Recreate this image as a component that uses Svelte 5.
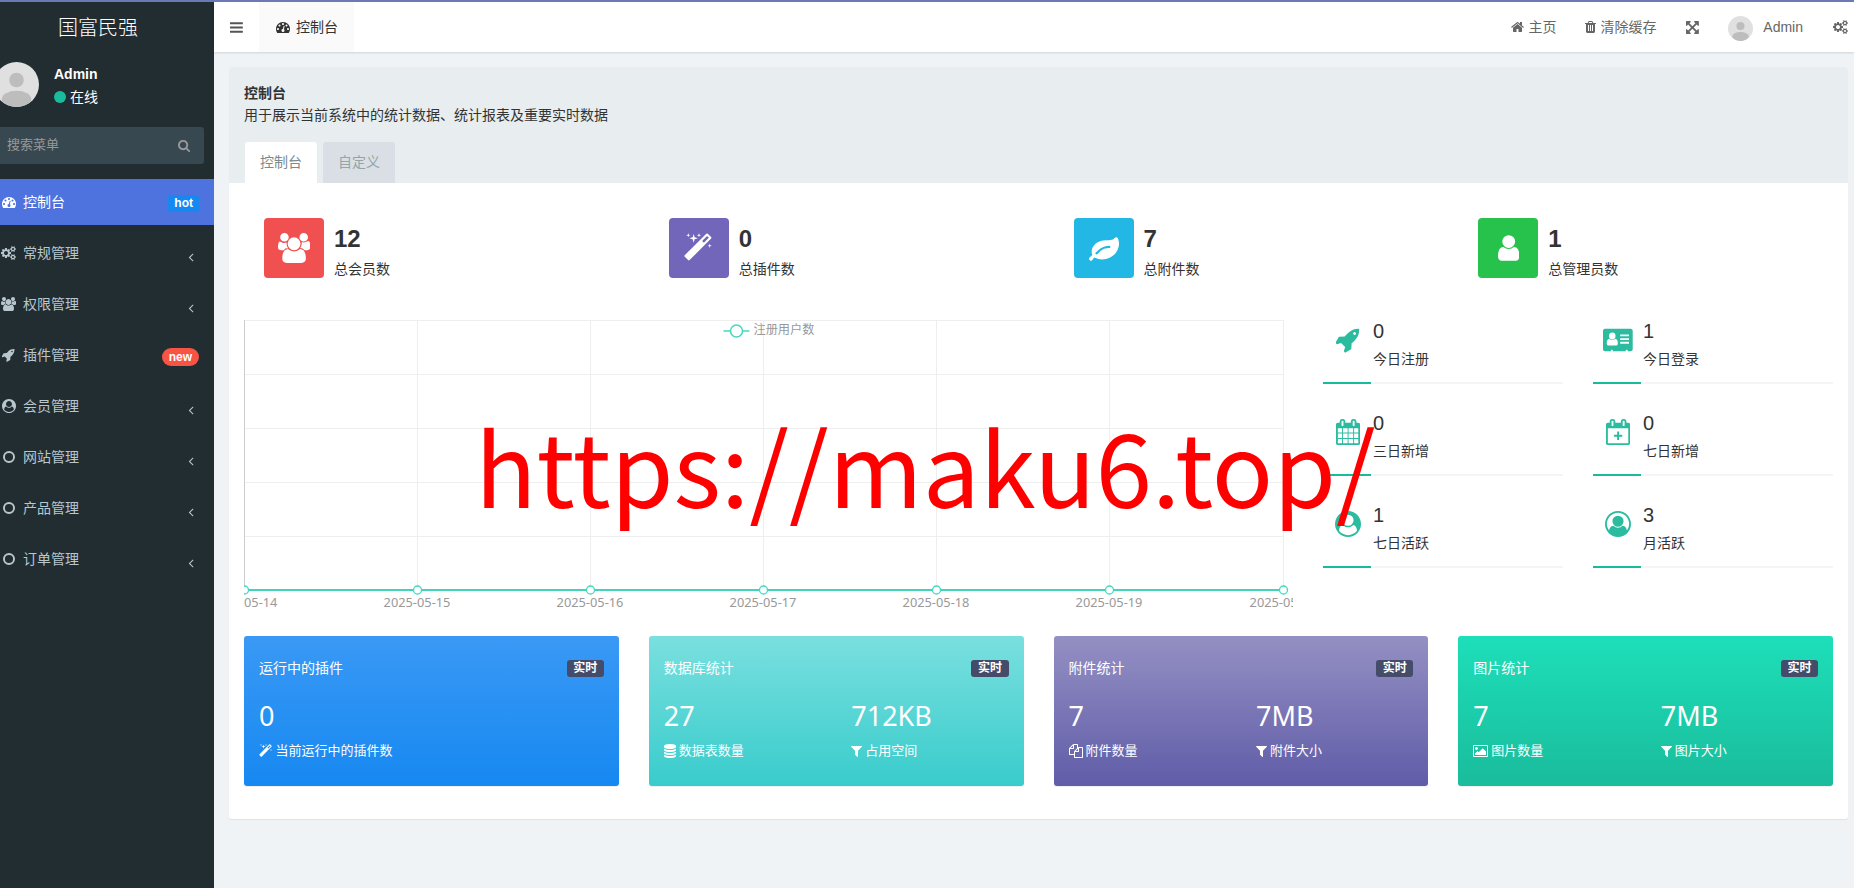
<script>
  // viewBox + path of every icon
  const gear = "q0 16-149 31-12 27-30 52 51 113 51 138 0 4-4 7-122 71-124 71-8 0-46-47t-52-68q-20 2-30 2t-30-2q-14 21-52 68t-46 47q-2 0-124-71-4-3-4-7 0-25 51-138-18-25-30-52-149-15-149-31v-140q0-16 149-31 13-29 30-52-51-113-51-138 0-4 4-7 4-2 35-20t59-34 30-16q8 0 46 46.5t52 67.5q20-2 30-2t30 2q51-71 92-112l6-2q4 0 124 70 4 3 4 7 0 25-51 138 17 23 30 52 149 15 149 31z";
  const tab = "v-288q0-13-9.5-22.5t-22.5-9.5h-64q-13 0-22.5 9.5t-9.5 22.5v288q0 13 9.5 22.5t22.5 9.5h64q13 0 22.5-9.5t9.5-22.5z";
  const calendarBox = "M1728 384v1280q0 52-38 90t-90 38h-1408q-52 0-90-38t-38-90v-1280q0-52 38-90t90-38h128v-96q0-66 47-113t113-47h64q66 0 113 47t47 113v96h384v-96q0-66 47-113t113-47h64q66 0 113 47t47 113v96h128q52 0 90 38t38 90z";
  const bar = "v128q0 26-19 45t-45 19h-1408q-26 0-45-19t-19-45v-128q0-26 19-45t45-19h1408q26 0 45 19t19 45z";
  const disk = "v170q0 69-103 128t-280 93.5-385 34.5-385-34.5-280-93.5-103-128v-170q119 84 325 127t443 43 443-43 325-127z";
  const slot = "v-704q0-14-9-23t-23-9h-64q-14 0-23 9t-9 23v704q0 14 9 23t23 9h64q14 0 23-9t9-23z";

  const icons = {
    bars: [128, 1536, `M1664 1344${bar}M1664 832${bar}M1664 320${bar}`],
    dashboard: [0, 1792, "M384 1152q0-53-37.5-90.5t-90.5-37.5-90.5 37.5-37.5 90.5 37.5 90.5 90.5 37.5 90.5-37.5 37.5-90.5zm192-448q0-53-37.5-90.5t-90.5-37.5-90.5 37.5-37.5 90.5 37.5 90.5 90.5 37.5 90.5-37.5 37.5-90.5zm428 481l101-382q6-26-7.5-48.5t-38.5-29.5-48 6.5-30 39.5l-101 382q-60 5-107 43.5t-63 98.5q-20 77 20 146t117 89 146-20 89-117q16-60-6-117t-72-91zm660-33q0-53-37.5-90.5t-90.5-37.5-90.5 37.5-37.5 90.5 37.5 90.5 90.5 37.5 90.5-37.5 37.5-90.5zm-640-640q0-53-37.5-90.5t-90.5-37.5-90.5 37.5-37.5 90.5 37.5 90.5 90.5 37.5 90.5-37.5 37.5-90.5zm448 192q0-53-37.5-90.5t-90.5-37.5-90.5 37.5-37.5 90.5 37.5 90.5 90.5 37.5 90.5-37.5 37.5-90.5zm320 448q0 261-141 483-19 29-54 29h-1402q-35 0-54-29-141-221-141-483 0-182 71-348t191-286 286-191 348-71 348 71 286 191 191 286 71 348z"],
    cogs: [0, 1920, `M896 896q0-106-75-181t-181-75-181 75-75 181 75 181 181 75 181-75 75-181zm768 512q0-52-38-90t-90-38-90 38-38 90q0 53 37.5 90.5t90.5 37.5 90.5-37.5 37.5-90.5zm0-1024q0-52-38-90t-90-38-90 38-38 90q0 53 37.5 90.5t90.5 37.5 90.5-37.5 37.5-90.5zm-384 421v185q0 10-7 19.5t-16 10.5l-155 24q-11 35-32 76 34 48 90 115 7 11 7 20 0 12-7 19-23 30-82.5 89.5t-78.5 59.5q-11 0-21-7l-115-90q-37 19-77 31-11 108-23 155-7 24-30 24h-186q-11 0-20-7.5t-10-17.5l-23-153q-34-10-75-31l-118 89q-7 7-20 7-11 0-21-8-144-133-144-160 0-9 7-19 10-14 41-53t47-61q-23-44-35-82l-152-24q-10-1-17-9.5t-7-19.5v-185q0-10 7-19.5t16-10.5l155-24q11-35 32-76-34-48-90-115-7-11-7-20 0-12 7-20 22-30 82-89t79-59q11 0 21 7l115 90q34-18 77-32 11-108 23-154 7-24 30-24h186q11 0 20 7.5t10 17.5l23 153q34 10 75 31l118-89q8-7 20-7 11 0 21 8 144 133 144 160 0 8-7 19-12 16-42 54t-45 60q23 48 34 82l152 23q10 2 17 10.5t7 19.5zM1920 1338v140${gear}M1920 314v140${gear}`],
    users: [0, 1920, "M593 896q-162 5-265 128h-134q-82 0-138-40.5t-56-118.5q0-353 124-353 6 0 43.5 21t97.5 42.5 119 21.5q67 0 133-23-5 37-5 66 0 159 93 293zm1071 637q0 120-73 189.5t-194 69.5h-874q-121 0-194-69.5t-73-189.5q0-53 3.5-103.5t14-109 26.5-108.5 43-97.5 62-81 85.5-53.5 111.5-20q10 0 43 21.5t73 48 107 48 135 21.5 135-21.5 107-48 73-48 43-21.5q61 0 111.5 20t85.5 53.5 62 81 43 97.5 26.5 108.5 14 109 3.5 103.5zm-1024-1277q0 106-75 181t-181 75-181-75-75-181 75-181 181-75 181 75 75 181zm704 384q0 159-112.5 271.5t-271.5 112.5-271.5-112.5-112.5-271.5 112.5-271.5 271.5-112.5 271.5 112.5 112.5 271.5zm576 225q0 78-56 118.5t-138 40.5h-134q-103-123-265-128 93-134 93-293 0-29-5-66 66 23 133 23 59 0 119-21.5t97.5-42.5 43.5-21q124 0 124 353zm-128-609q0 106-75 181t-181 75-181-75-75-181 75-181 181-75 181 75 75 181z"],
    rocket: [64, 1664, "M1440 448q0-40-28-68t-68-28-68 28-28 68 28 68 68 28 68-28 28-68zm224-288q0 249-75.5 430.5t-253.5 360.5q-81 80-195 176l-20 379q-2 16-16 26l-384 224q-7 4-16 4-12 0-23-9l-64-64q-13-14-8-32l85-276-281-281-276 85q-3 1-9 1-14 0-23-9l-64-64q-17-19-5-39l224-384q10-14 26-16l379-20q96-114 176-195 188-187 358-258t431-71q14 0 24 9.5t10 22.5z"],
    member: [0, 1792, "M1523 1339q-22-155-87.5-257.5t-184.5-118.5q-67 74-159.5 115.5t-195.5 41.5-195.5-41.5-159.5-115.5q-119 16-184.5 118.5t-87.5 257.5q106 150 271 237.5t356 87.5 356-87.5 271-237.5zm-243-699q0-159-112.5-271.5t-271.5-112.5-271.5 112.5-112.5 271.5 112.5 271.5 271.5 112.5 271.5-112.5 112.5-271.5zm512 256q0 182-71 347.5t-190.5 286-285.5 191.5-349 71-348-71-286-191-191-286-71-348 71-348 191-286 286-191 348-71 348 71 286 191 191 286 71 348z"],
    memberOutline: [0, 1792, "M896 0q182 0 348 71t286 191 191 286 71 348q0 181-70.5 347t-190.5 286-286 191.5-349 71.5-349-71-285.5-191.5-190.5-286-71-347.5 71-348 191-286 286-191 348-71zm619 1351q149-205 149-455 0-156-61-298t-164-245-245-164-298-61-298 61-245 164-164 245-61 298q0 250 149 455 66-327 306-327 131 128 313 128t313-128q240 0 306 327zm-235-647q0-159-112.5-271.5t-271.5-112.5-271.5 112.5-112.5 271.5 112.5 271.5 271.5 112.5 271.5-112.5 112.5-271.5z"],
    circle: [128, 1536, "M896 128a768 768 0 1 0 0 1536a768 768 0 1 0 0-1536zM896 376a520 520 0 1 1 0 1040a520 520 0 1 1 0-1040z"],
    search: [64, 1664, "M1216 832q0-185-131.5-316.5t-316.5-131.5-316.5 131.5-131.5 316.5 131.5 316.5 316.5 131.5 316.5-131.5 131.5-316.5zm512 832q0 52-38 90t-90 38q-54 0-90-38l-343-342q-179 124-399 124-143 0-273.5-55.5t-225-150-150-225-55.5-273.5 55.5-273.5 150-225 225-150 273.5-55.5 273.5 55.5 225 150 150 225 55.5 273.5q0 220-124 399l343 343q37 37 37 90z"],
    angle: [512, 768, "M1203 544q0 13-10 23l-393 393 393 393q10 10 10 23t-10 23l-50 50q-10 10-23 10t-23-10l-466-466q-10-10-10-23t10-23l466-466q10-10 23-10t23 10l50 50q10 10 10 23z"],
    home: [64, 1664, "M1472 992v480q0 26-19 45t-45 19h-384v-384h-256v384h-384q-26 0-45-19t-19-45v-480q0-1 .5-3t.5-3l575-474 575 474q1 2 1 6zm223-69l-62 74q-8 9-21 11h-3q-13 0-21-7l-692-577-692 577q-12 8-24 7-13-2-21-11l-62-74q-8-10-7-23.5t11-21.5l719-599q32-26 76-26t76 26l244 204v-195q0-14 9-23t23-9h192q14 0 23 9t9 23v408l219 182q10 8 11 21.5t-7 23.5z"],
    trash: [192, 1408, `M704 1376${slot}M960 1376${slot}M1216 1376${slot}M672 384h448l-48-117q-7-9-17-11h-317q-10 2-17 11zm928 32v64q0 14-9 23t-23 9h-96v948q0 83-47 143.5t-113 60.5h-832q-66 0-113-58.5t-47-141.5v-952h-96q-14 0-23-9t-9-23v-64q0-14 9-23t23-9h309l70-167q15-37 54-63t79-26h320q40 0 79 26t54 63l70 167h309q14 0 23 9t9 23z`],
    arrows: [128, 1536, "M1411 541l-355 355 355 355 144-144q29-31 70-14 39 17 39 59v448q0 26-19 45t-45 19h-448q-42 0-59-40-17-39 14-69l144-144-355-355-355 355 144 144q31 30 14 69-17 40-59 40h-448q-26 0-45-19t-19-45v-448q0-42 40-59 39-17 69 14l144 144 355-355-355-355-144 144q-19 19-45 19-12 0-24-5-40-17-40-59v-448q0-26 19-45t45-19h448q42 0 59 40 17 39-14 69l-144 144 355 355 355-355-144-144q-31-30-14-69 17-40 59-40h448q26 0 45 19t19 45v448q0 42-39 59-13 5-25 5-26 0-45-19z"],
    magic: [64, 1728, "M1254 581l293-293-107-107-293 293zm447-293q0 27-18 45l-1286 1286q-18 18-45 18t-45-18l-198-198q-18-18-18-45t18-45l1286-1286q18-18 45-18t45 18l198 198q18 18 18 45zm-1351-190l98 30-98 30-30 98-30-98-98-30 98-30 30-98zm350 162l196 60-196 60-60 196-60-196-196-60 196-60 60-196zm930 478l98 30-98 30-30 98-30-98-98-30 98-30 30-98zm-640-640l98 30-98 30-30 98-30-98-98-30 98-30 30-98z"],
    leaf: [0, 1792, "M1280 832q0-26-19-45t-45-19q-172 0-318 49.5t-259.5 134-235.5 219.5q-19 21-19 45 0 26 19 45t45 19q24 0 45-19 27-24 74-71t67-66q137-124 268.5-176t313.5-52q26 0 45-19t19-45zm512-198q0 95-20 193-46 224-184.5 383t-357.5 268q-214 108-438 108-148 0-286-47-15-5-88-42t-96-37q-16 0-39.5 32t-45 70-52.5 70-60 32q-43 0-63.5-17.5t-45.5-59.5q-2-4-6-11t-5.5-10-3-9.5-1.5-13.5q0-35 31-73.5t68-65.5 68-56 31-48q0-4-14-38t-16-44q-9-51-9-104 0-115 43.5-220t119-184.5 170.5-139 204-95.5q55-18 145-25.5t179.5-9 178.5-6 163.5-24 113.5-56.5l29.5-29.5 29.5-28 27-20 36.5-16 43.5-4.5q39 0 70.5 46t47.5 112 24 124 8 96z"],
    user: [256, 1280, "M1536 1399q0 109-62.5 187t-150.5 78h-854q-88 0-150.5-78t-62.5-187q0-85 8.5-160.5t31.5-152 58.5-131 94-89 134.5-34.5q131 128 313 128t313-128q76 0 134.5 34.5t94 89 58.5 131 31.5 152 8.5 160.5zm-256-887q0 159-112.5 271.5t-271.5 112.5-271.5-112.5-112.5-271.5 112.5-271.5 271.5-112.5 271.5 112.5 112.5 271.5z"],
    card: [0, 2048, "M128 128h1792q53 0 90.5 37.5t37.5 90.5v1280q0 53-37.5 90.5t-90.5 37.5h-224v-64q0-32-32-32h-64q-32 0-32 32v64h-896v-64q0-32-32-32h-64q-32 0-32 32v64h-416q-53 0-90.5-37.5t-37.5-90.5v-1280q0-53 37.5-90.5t90.5-37.5zM640 384a224 240 0 1 0 0 480a224 240 0 1 0 0-480zM432 808q-176 18-176 322 0 150 128 150h512q128 0 128-150 0-304-176-322-84 88-208 88t-208-88zM1184 512v128h608v-128zM1184 768v128h608v-128zM1184 1024v128h608v-128z"],
    calendar: [64, 1664, `${calendarBox}M192 1664h288v-288h-288zM544 1664h320v-288h-320zM928 1664h320v-288h-320zM1312 1664h288v-288h-288zM192 1312h288v-320h-288zM544 1312h320v-320h-320zM928 1312h320v-320h-320zM1312 1312h288v-320h-288zM192 928h288v-288h-288zM544 928h320v-288h-320zM928 928h320v-288h-320zM1312 928h288v-288h-288zM576 448${tab}M1344 448${tab}`],
    calendarPlus: [64, 1664, `${calendarBox}M192 1664h1408v-1024h-1408zM832 1440v-224h-224v-128h224v-224h128v224h224v128h-224v224zM576 448${tab}M1344 448${tab}`],
    database: [128, 1536, `M1664 598${disk}M1664 1366${disk}M1664 982${disk}M896 0q208 0 385 34.5t280 93.5 103 128v128q0 69-103 128t-280 93.5-385 34.5-385-34.5-280-93.5-103-128v-128q0-69 103-128t280-93.5 385-34.5z`],
    filter: [192, 1408, "M1595 295q17 41-14 70l-493 493v742q0 42-39 59-13 5-25 5-27 0-45-19l-256-256q-19-19-19-45v-486l-493-493q-31-29-14-70 17-39 59-39h1280q42 0 59 39z"],
    files: [0, 1792, "M1696 384q40 0 68 28t28 68v1216q0 40-28 68t-68 28h-960q-40 0-68-28t-28-68v-288h-544q-40 0-68-28t-28-68v-672q0-40 20-88t48-76l408-408q28-28 76-48t88-20h416q40 0 68 28t28 68v328q68-40 128-40h416zm-544 213l-299 299h299v-299zm-640-384l-299 299h299v-299zm196 647l316-316v-416h-384v416q0 40-28 68t-68 28h-416v640h512v-256q0-40 20-88t48-76zm956 804v-1152h-384v416q0 40-28 68t-68 28h-416v640h896z"],
    picture: [0, 1920, "M640 576q0 80-56 136t-136 56-136-56-56-136 56-136 136-56 136 56 56 136zm1024 384v448h-1408v-192l320-320 160 160 512-512zm96-704h-1600q-13 0-22.5 9.5t-9.5 22.5v1216q0 13 9.5 22.5t22.5 9.5h1600q13 0 22.5-9.5t9.5-22.5v-1216q0-13-9.5-22.5t-22.5-9.5zm160 32v1216q0 66-47 113t-113 47h-1600q-66 0-113-47t-47-113v-1216q0-66 47-113t113-47h1600q66 0 113 47t47 113z"]
  };

  let menu = [
    { icon: "dashboard", label: "控制台", badge: "hot", active: true },
    { icon: "cogs", label: "常规管理" },
    { icon: "users", label: "权限管理" },
    { icon: "rocket", label: "插件管理", badge: "new" },
    { icon: "member", label: "会员管理" },
    { icon: "circle", label: "网站管理" },
    { icon: "circle", label: "产品管理" },
    { icon: "circle", label: "订单管理" }
  ];

  let stats = [
    { icon: "users", color: "red", value: 12, label: "总会员数" },
    { icon: "magic", color: "purple", value: 0, label: "总插件数" },
    { icon: "leaf", color: "blue", value: 7, label: "总附件数" },
    { icon: "user", color: "green", value: 1, label: "总管理员数" }
  ];

  let minis = [
    { icon: "rocket", value: 0, label: "今日注册" },
    { icon: "card", value: 1, label: "今日登录" },
    { icon: "calendar", value: 0, label: "三日新增" },
    { icon: "calendarPlus", value: 0, label: "七日新增" },
    { icon: "member", value: 1, label: "七日活跃" },
    { icon: "memberOutline", value: 3, label: "月活跃" }
  ];

  let cards = [
    { color: "card-blue", title: "运行中的插件", items: [["0", "magic", "当前运行中的插件数"]] },
    { color: "card-aqua", title: "数据库统计", items: [["27", "database", "数据表数量"], ["712KB", "filter", "占用空间"]] },
    { color: "card-purple", title: "附件统计", items: [["7", "files", "附件数量"], ["7MB", "filter", "附件大小"]] },
    { color: "card-green", title: "图片统计", items: [["7", "picture", "图片数量"], ["7MB", "filter", "图片大小"]] }
  ];

  let days = ["2025-05-14", "2025-05-15", "2025-05-16", "2025-05-17", "2025-05-18", "2025-05-19", "2025-05-20"];
  const dayX = (i) => Math.floor(i * 173.17) + 0.5;
</script>

{#snippet icon(name, size)}
  <svg
    class="icon"
    width={(icons[name][1] / 1792) * size}
    height={size}
    viewBox={`${icons[name][0]} 0 ${icons[name][1]} 1792`}
  >
    <path d={icons[name][2]} fill="currentColor" fill-rule="evenodd" />
  </svg>
{/snippet}

{#snippet avatar(size)}
  <svg class="avatar" width={size} height={size} viewBox="0 0 45 45">
    <clipPath id={`round${size}`}><circle cx="22.5" cy="22.5" r="22.5" /></clipPath>
    <g clip-path={`url(#round${size})`}>
      <rect width="45" height="45" fill="#e0e0e0" />
      <circle cx="22.5" cy="18" r="7.3" fill="#bdbdbd" />
      <ellipse cx="22.5" cy="37" rx="14.8" ry="8.3" fill="#bdbdbd" />
    </g>
  </svg>
{/snippet}

<div class="page">
  <aside>
    <div class="brand">国富民强</div>
    <div class="user">
      {@render avatar(45)}
      <div>
        <p class="name">Admin</p>
        <p class="online"><span class="dot"></span>在线</p>
      </div>
    </div>
    <div class="search">
      <span>搜索菜单</span>
      {@render icon("search", 13)}
    </div>
    <ul>
      {#each menu as item}
        <li class:active={item.active}>
          <span class="menu-icon">{@render icon(item.icon, 14)}</span>
          <span class="menu-label">{item.label}</span>
          {#if item.badge}
            <span class={`badge ${item.badge}`}>{item.badge}</span>
          {:else}
            <span class="arrow">{@render icon("angle", 14)}</span>
          {/if}
        </li>
      {/each}
    </ul>
  </aside>

  <main>
    <header>
      <div class="toggle">{@render icon("bars", 15)}</div>
      <div class="nav-tab">{@render icon("dashboard", 14)}<span>控制台</span></div>
      <nav>
        <span class="nav-home">{@render icon("home", 14)}主页</span>
        <span class="nav-trash">{@render icon("trash", 14)}清除缓存</span>
        <span class="nav-full">{@render icon("arrows", 15)}</span>
        <span class="nav-user">{@render avatar(25)}Admin</span>
        <span class="nav-cogs">{@render icon("cogs", 14)}</span>
      </nav>
    </header>

    <section class="panel">
      <div class="heading">
        <h1>控制台</h1>
        <p>用于展示当前系统中的统计数据、统计报表及重要实时数据</p>
        <div class="tabs">
          <span class="current">控制台</span>
          <span>自定义</span>
        </div>
      </div>

      <div class="stats">
        {#each stats as stat}
          <div class="stat">
            <div class={`stat-icon ${stat.color}`}>{@render icon(stat.icon, 30)}</div>
            <div>
              <p class="stat-value">{stat.value}</p>
              <p class="stat-label">{stat.label}</p>
            </div>
          </div>
        {/each}
      </div>

      <div class="report">
        <svg class="chart" width="1049" height="320" viewBox="0 0 1049 320">
          {#each [4.5, 58.5, 112.5, 166.5, 220.5] as y}
            <line x1="0" x2="1039" y1={y} y2={y} stroke="#eee" />
          {/each}
          {#each days as _, i}
            <line x1={dayX(i)} x2={dayX(i)} y1="4" y2="274" stroke={i === 0 ? "#ccc" : "#eee"} />
          {/each}
          <line x1="0" x2="1039" y1="274" y2="274" stroke="#44d2b9" stroke-width="2" />
          {#each days as day, i}
            <circle cx={dayX(i)} cy="274" r="4" fill="#fff" stroke="#44d9bf" stroke-width="1.3" />
            <text class="day" x={dayX(i) - 0.5} y="291" text-anchor="middle">{day}</text>
          {/each}
          <line x1="479.5" x2="505.5" y1="15" y2="15" stroke="#44d9bf" stroke-width="1.5" />
          <circle cx="492.5" cy="15" r="6" fill="#fff" stroke="#44d9bf" stroke-width="1.5" />
          <text class="legend" x="509.5" y="17.5">注册用户数</text>
        </svg>

        <div class="minis">
          {#each minis as mini}
            <div class="mini">
              <div class="mini-row">
                <div class="mini-icon">{@render icon(mini.icon, 26)}</div>
                <div>
                  <p class="mini-value">{mini.value}</p>
                  <p class="mini-label">{mini.label}</p>
                </div>
              </div>
              <div class="progress"><div></div></div>
            </div>
          {/each}
        </div>
      </div>

      <div class="cards">
        {#each cards as card}
          <div class={`card ${card.color}`}>
            <div class="card-head">
              <h2>{card.title}</h2>
              <span class="live">实时</span>
            </div>
            <div class="card-items">
              {#each card.items as [value, name, label]}
                <div>
                  <p class="card-value">{value}</p>
                  <p class="card-label">{@render icon(name, 14)}<span>{label}</span></p>
                </div>
              {/each}
            </div>
          </div>
        {/each}
      </div>
    </section>
  </main>

  <div class="watermark">https://maku6.top/</div>
</div>

<style>
  :global(body) {
    margin: 0;
    overflow: hidden;
  }
  p, ul, h1, h2 {
    margin: 0;
    padding: 0;
  }
  .page {
    position: relative;
    display: flex;
    box-sizing: border-box;
    width: 1854px;
    height: 888px;
    border-top: 2px solid #6b7ab5;
    background: #eff3f6;
    color: #333;
    font-family: "Liberation Sans", "Noto Sans CJK SC", sans-serif;
    font-size: 14px;
    line-height: 20px;
    overflow: hidden;
  }
  .icon, .avatar {
    display: block;
    flex: none;
  }

  aside {
    width: 214px;
    flex: none;
    background: #222d32;
    color: #fff;
    overflow: hidden;
  }
  .brand {
    height: 50px;
    line-height: 52px;
    padding-left: 58px;
    font-size: 20px;
    font-weight: 300;
  }
  .user {
    display: flex;
    gap: 15px;
    height: 45px;
    margin: 10px 0 20px -6px;
  }
  .name {
    padding-top: 2px;
    font-weight: bold;
  }
  .online {
    display: flex;
    align-items: center;
    gap: 4px;
    padding-top: 3px;
  }
  .dot {
    width: 12px;
    height: 12px;
    border-radius: 50%;
    background: #18bc9c;
  }
  .search {
    display: flex;
    align-items: center;
    justify-content: space-between;
    box-sizing: border-box;
    width: 204px;
    height: 37px;
    padding: 0 14px 1px 7px;
    border-radius: 0 3px 3px 0;
    background: #374850;
    color: #999;
    font-size: 13px;
  }
  ul {
    padding-top: 15px;
    list-style: none;
  }
  li {
    display: flex;
    align-items: center;
    height: 46px;
    margin-bottom: 5px;
    padding: 0 15px 0 1px;
    color: #b8c7ce;
  }
  li.active {
    background: #4e73df;
    color: #fff;
  }
  .menu-icon {
    display: flex;
    justify-content: center;
    width: 15px;
    margin-right: 7px;
  }
  .menu-label {
    flex: 1;
  }
  .arrow {
    padding: 7px 5px 0 0;
  }
  .badge {
    margin-top: 3px;
    padding: 0 6px;
    border-radius: 3px;
    color: #fff;
    font-size: 12px;
    font-weight: bold;
    line-height: 17px;
  }
  .hot {
    background: #1688f1;
  }
  .new {
    padding: 0 7px;
    border-radius: 9px;
    background: #f75444;
    line-height: 18px;
  }

  main {
    flex: 1;
  }
  header {
    display: flex;
    align-items: center;
    height: 50px;
    background: #fff;
    box-shadow: 0 1px 2px rgba(0, 21, 41, 0.14);
  }
  .toggle {
    width: 29px;
    padding-left: 16px;
    color: #555;
  }
  .nav-tab {
    display: flex;
    align-items: center;
    gap: 6px;
    box-sizing: border-box;
    width: 95px;
    height: 50px;
    padding-left: 17px;
    background: #fafafa;
    color: #333;
  }
  nav {
    display: flex;
    align-items: center;
    margin-left: auto;
    color: #666;
  }
  nav span {
    display: flex;
    align-items: center;
    gap: 4px;
  }
  .nav-home {
    margin-right: 29px;
  }
  .nav-trash {
    margin-right: 30px;
  }
  .nav-full {
    margin-right: 29px;
  }
  .nav-user {
    margin-right: 30px;
  }
  nav .nav-user {
    gap: 10px;
  }
  .nav-user .avatar {
    margin-top: 3px;
  }
  .nav-cogs {
    margin-right: 6px;
  }

  .panel {
    width: 1619px;
    height: 752px;
    margin: 15px 0 0 15px;
    border-radius: 3px;
    background: #fff;
    box-shadow: 0 1px 1px rgba(0, 0, 0, 0.07);
  }
  .heading {
    box-sizing: border-box;
    height: 116px;
    padding: 15px 15px 0;
    border-radius: 3px 3px 0 0;
    background: #e8edf0;
  }
  h1 {
    font-size: 14px;
    line-height: 22px;
  }
  .heading p {
    line-height: 22px;
  }
  .tabs {
    display: flex;
    gap: 6px;
    margin: 16px 0 0 1px;
  }
  .tabs span {
    width: 72px;
    height: 41px;
    border-radius: 3px 3px 0 0;
    background: #d9dfe5;
    color: #95a5a6;
    line-height: 41px;
    text-align: center;
  }
  .tabs .current {
    background: #fff;
    color: #7b8a8b;
  }

  .stats {
    display: grid;
    grid-template-columns: repeat(4, 404.75px);
    height: 60px;
    padding: 35px 0 0 35px;
  }
  .stat {
    display: flex;
    gap: 10px;
  }
  .stat-icon {
    display: flex;
    align-items: center;
    justify-content: center;
    width: 60px;
    height: 60px;
    border-radius: 4px;
    color: #fff;
  }
  .red {
    background: #f05050;
  }
  .purple {
    background: #7266ba;
  }
  .blue {
    background: #23b7e5;
  }
  .green {
    background: #27c24c;
  }
  .stat-value {
    padding-top: 8px;
    font-size: 24px;
    font-weight: bold;
    line-height: 26px;
  }
  .stat-label {
    padding-top: 7px;
  }

  .report {
    display: flex;
    gap: 30px;
    margin: 38px 0 0 15px;
  }
  .chart {
    flex: none;
    overflow: hidden;
  }
  .day {
    fill: #999;
    font-family: "Noto Sans", sans-serif;
    font-size: 12.8px;
  }
  .legend {
    fill: #999;
    font-size: 12.2px;
  }
  .minis {
    display: grid;
    grid-template-columns: 240px 240px;
    grid-auto-rows: 68px;
    gap: 24px 30px;
  }
  .mini-row {
    display: flex;
    height: 66px;
  }
  .mini-icon {
    display: flex;
    justify-content: center;
    width: 50px;
    padding-top: 11px;
    color: #2bbb9f;
  }
  .mini-value {
    padding-top: 4px;
    font-size: 20px;
    line-height: 23px;
  }
  .mini-label {
    padding-top: 6px;
  }
  .progress {
    height: 2px;
    background: #f4f5f5;
  }
  .progress div {
    width: 20%;
    height: 2px;
    background: #18bc9c;
  }

  .cards {
    display: grid;
    grid-template-columns: repeat(4, 374.75px);
    gap: 30px;
    padding-left: 15px;
  }
  .card {
    box-sizing: border-box;
    height: 150px;
    padding: 22px 15px 0;
    border-radius: 3px;
    color: #fff;
    box-shadow: 0 1px 1px rgba(0, 0, 0, 0.07);
  }
  .card-blue {
    background: linear-gradient(#3a99f5, #1688f1);
  }
  .card-aqua {
    background: linear-gradient(#7adfdf, #39cccc);
  }
  .card-purple {
    background: linear-gradient(#9490c3, #605ca8);
  }
  .card-green {
    background: linear-gradient(#1ddfb9, #1abc9c);
  }
  .card-head {
    display: flex;
    align-items: center;
    justify-content: space-between;
  }
  h2 {
    font-size: 14px;
    font-weight: normal;
  }
  .live {
    padding: 0 6.5px;
    border-radius: 3px;
    background: #444c69;
    font-size: 12px;
    font-weight: bold;
    line-height: 17px;
  }
  .card-items {
    display: flex;
  }
  .card-items > div {
    flex: none;
    width: 187.5px;
  }
  .card-value {
    padding-top: 22px;
    font-family: "Noto Sans", sans-serif;
    font-size: 27px;
    line-height: 32px;
  }
  .card-label {
    display: flex;
    align-items: center;
    gap: 3px;
    padding-top: 9px;
    font-size: 13px;
    white-space: nowrap;
  }

  .watermark {
    position: absolute;
    left: 475px;
    top: 392px;
    color: #f00;
    font-family: "Noto Sans CJK SC", sans-serif;
    font-size: 101.4px;
    line-height: 140px;
    white-space: nowrap;
  }
</style>
